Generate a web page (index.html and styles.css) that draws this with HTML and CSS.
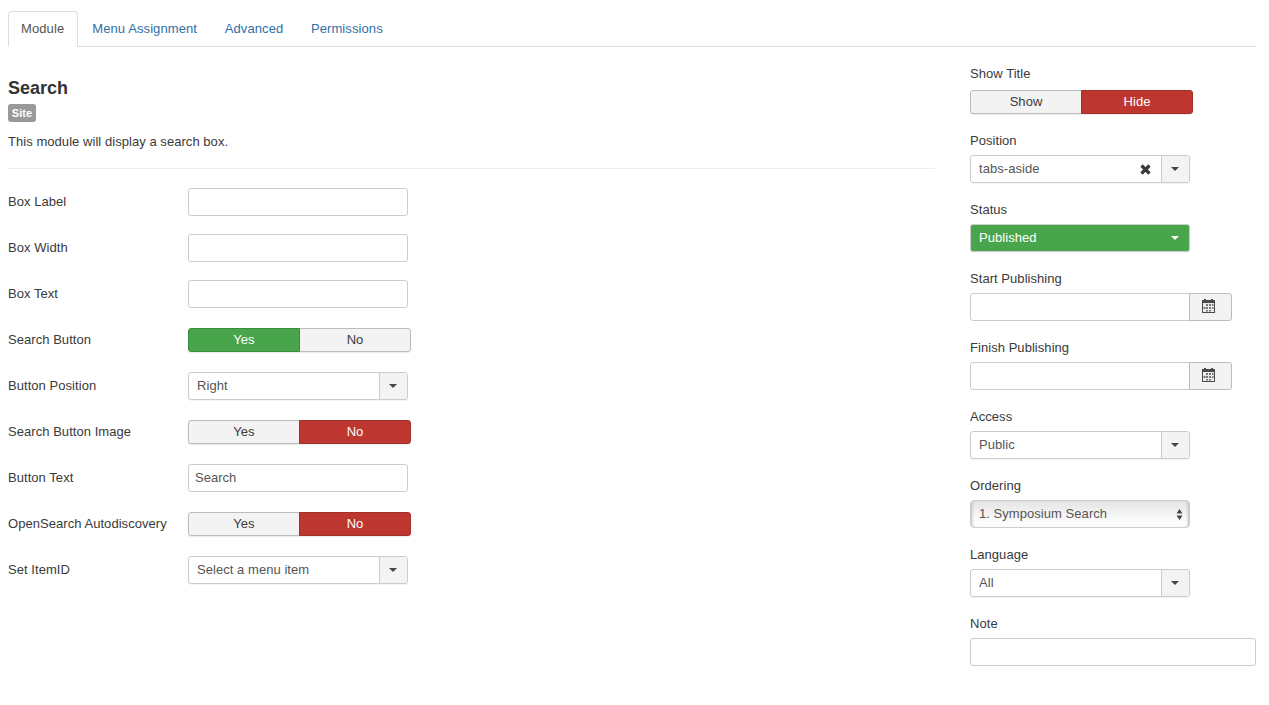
FILE: index.html
```html
<!DOCTYPE html>
<html lang="en">
<head>
<meta charset="utf-8">
<title>Module: Search</title>
<link rel="stylesheet" href="styles.css">
</head>
<body>
<ul class="tabs">
  <li class="tab active">Module</li>
  <li class="tab">Menu Assignment</li>
  <li class="tab">Advanced</li>
  <li class="tab">Permissions</li>
</ul>
<div class="page">
  <main class="main">
    <h2 class="title">Search</h2>
    <span class="badge">Site</span>
    <p class="desc">This module will display a search box.</p>
    <hr class="rule">
    <div class="rows">
      <div class="row"><label class="row-label">Box Label</label><input class="input" type="text"></div>
      <div class="row"><label class="row-label">Box Width</label><input class="input" type="text"></div>
      <div class="row"><label class="row-label">Box Text</label><input class="input" type="text"></div>
      <div class="row"><label class="row-label">Search Button</label>
        <div class="toggle"><span class="seg green">Yes</span><span class="seg">No</span></div></div>
      <div class="row"><label class="row-label">Button Position</label>
        <div class="chosen"><span class="chosen-text">Right</span><span class="chosen-btn"><i class="caret"></i></span></div></div>
      <div class="row"><label class="row-label">Search Button Image</label>
        <div class="toggle"><span class="seg">Yes</span><span class="seg red">No</span></div></div>
      <div class="row"><label class="row-label">Button Text</label><input class="input" type="text" value="Search"></div>
      <div class="row"><label class="row-label">OpenSearch Autodiscovery</label>
        <div class="toggle"><span class="seg">Yes</span><span class="seg red">No</span></div></div>
      <div class="row"><label class="row-label">Set ItemID</label>
        <div class="chosen"><span class="chosen-text">Select a menu item</span><span class="chosen-btn"><i class="caret"></i></span></div></div>
    </div>
  </main>
  <aside class="side">
    <div class="field first"><label class="field-label">Show Title</label>
      <div class="toggle"><span class="seg">Show</span><span class="seg red">Hide</span></div></div>
    <div class="field"><label class="field-label">Position</label>
      <div class="chosen"><span class="chosen-text">tabs-aside</span>
        <svg class="clear" width="11" height="11" viewBox="0 0 11 11"><path d="M1.500 1.500 9.500 9.500M9.500 1.500 1.500 9.500" stroke="#3a3a3a" stroke-width="3.200" fill="none"/></svg>
        <span class="chosen-btn"><i class="caret"></i></span></div></div>
    <div class="field"><label class="field-label">Status</label>
      <div class="chosen status"><span class="chosen-text">Published</span><span class="chosen-btn"><i class="caret"></i></span></div></div>
    <div class="field"><label class="field-label">Start Publishing</label>
      <div class="date"><input class="input date-input" type="text"><span class="date-btn">
        <svg class="cal" width="13" height="14" viewBox="0 0 13 14"><path d="M2 0h2v1h5V0h2v1h2v13H0V1h2z" fill="#4a4a4a"/><path d="M1 4h11v9H1z" fill="#ececec"/><path d="M4 5h2v2H4zM7 5h2v2H7zM10 5h1.500v2H10zM1.500 8h2v2h-2zM4 8h2v2H4zM7 8h2v2H7zM10 8h1.500v2H10zM4 11h2v1.500H4zM7 11h2v1.500H7z" fill="#777"/></svg></span></div></div>
    <div class="field"><label class="field-label">Finish Publishing</label>
      <div class="date"><input class="input date-input" type="text"><span class="date-btn">
        <svg class="cal" width="13" height="14" viewBox="0 0 13 14"><path d="M2 0h2v1h5V0h2v1h2v13H0V1h2z" fill="#4a4a4a"/><path d="M1 4h11v9H1z" fill="#ececec"/><path d="M4 5h2v2H4zM7 5h2v2H7zM10 5h1.500v2H10zM1.500 8h2v2h-2zM4 8h2v2H4zM7 8h2v2H7zM10 8h1.500v2H10zM4 11h2v1.500H4zM7 11h2v1.500H7z" fill="#777"/></svg></span></div></div>
    <div class="field"><label class="field-label">Access</label>
      <div class="chosen"><span class="chosen-text">Public</span><span class="chosen-btn"><i class="caret"></i></span></div></div>
    <div class="field"><label class="field-label">Ordering</label>
      <div class="native"><span>1. Symposium Search</span>
        <svg width="7" height="13" viewBox="0 0 7 13"><path d="M3.500 1 6.500 5.500h-6zM3.500 12 .5 7.500h6z" fill="#444"/></svg></div></div>
    <div class="field"><label class="field-label">Language</label>
      <div class="chosen"><span class="chosen-text">All</span><span class="chosen-btn"><i class="caret"></i></span></div></div>
    <div class="field"><label class="field-label">Note</label><input class="input note" type="text"></div>
  </aside>
</div>
</body>
</html>
```

FILE: styles.css
```css
* { box-sizing: border-box; }
html, body { margin: 0; padding: 0; }
body {
  background: #fff;
  color: #3a3a3a;
  font: 13px/18px "Liberation Sans", Arial, sans-serif;
  letter-spacing: .05px;
  padding: 0 13px 0 8px;
  height: 705px;
  overflow: hidden;
}

/* Tabs */
.tabs {
  display: flex;
  gap: 2px;
  list-style: none;
  margin: 11px 0 0;
  padding: 0;
  height: 36px;
  border-bottom: 1px solid #ddd;
}
.tab {
  height: 36px;
  padding: 8px 13px 0 12px;
  border: 1px solid transparent;
  border-radius: 4px 4px 0 0;
  color: #2f70a9;
  line-height: 18px;
  letter-spacing: .1px;
}
.tab + .tab { padding-left: 11px; padding-right: 12.6px; }
.tab.active {
  color: #555;
  background: #fff;
  border-color: #ddd #ddd #fff;
}

/* Layout */
.page {
  display: grid;
  grid-template-columns: 927px 286px;
  column-gap: 35px;
}
.main { padding-top: 29px; }
.side { padding-top: 19px; }

.title {
  margin: 0;
  font-size: 18px;
  line-height: 24px;
  font-weight: bold;
  color: #333;
  letter-spacing: 0;
}
.badge {
  display: block;
  width: 28px;
  height: 18px;
  margin-top: 4px;
  background: #999;
  border-radius: 3px;
  color: #fff;
  font-size: 11px;
  font-weight: bold;
  line-height: 18px;
  text-align: center;
}
.desc { margin: 11px 0 0; line-height: 18px; }
.rule {
  border: 0;
  border-top: 1px solid #eee;
  margin: 17px 0 19px;
}

/* Rows */
.rows { display: flex; flex-direction: column; gap: 18px; }
.row { display: flex; align-items: center; height: 28px; }
.row-label { width: 180px; flex: none; }

.field { margin-bottom: 17px; }
.field-label { display: block; height: 18px; margin-bottom: 6px; line-height: 20px; }
.first .field-label { line-height: 16px; }
.field > .toggle { margin: 2px 0; }

/* Controls */
.input {
  display: block;
  width: 220px;
  height: 28px;
  padding: 3px 6px 5px;
  border: 1px solid #ccc;
  border-radius: 3px;
  background: #fff;
  color: #555;
  font: 13px/18px "Liberation Sans", Arial, sans-serif;
  outline: 0;
}
.note { width: 286px; }

.toggle {
  display: flex;
  width: 223px;
  height: 24px;
  border-radius: 3px;
  box-shadow: 0 1px 1px rgba(0,0,0,.08);
}
.seg {
  flex: 1 1 50%;
  border: 1px solid #bbb;
  background: #f3f3f3;
  color: #3a3a3a;
  text-align: center;
  line-height: 22px;
}
.seg:first-child { border-radius: 3px 0 0 3px; }
.seg:last-child { border-radius: 0 3px 3px 0; }
.seg + .seg { margin-left: -1px; }
.seg.green { background: #48a54c; border-color: #3a8a3f; color: #fff; position: relative; }
.seg.red { background: #bd362f; border-color: #a32f29; color: #fff; position: relative; }

.chosen {
  display: flex;
  align-items: stretch;
  width: 220px;
  height: 28px;
  border: 1px solid #ccc;
  border-radius: 3px;
  background: #fff;
  color: #555;
  box-shadow: 0 1px 1px rgba(0,0,0,.05);
}
.chosen-text { flex: 1; padding-left: 8px; line-height: 26px; white-space: nowrap; }
.chosen-btn {
  flex: none;
  display: flex;
  align-items: center;
  justify-content: center;
  width: 28px;
  padding-right: 1px;
  background: #f3f3f3;
  border-left: 1px solid #ccc;
  border-radius: 0 2px 2px 0;
}
.caret {
  width: 0;
  height: 0;
  border-left: 4px solid transparent;
  border-right: 4px solid transparent;
  border-top: 4px solid #444;
}
.clear { align-self: center; margin-right: 10px; }

.chosen.status { background: #48a54c; border-color: #ccc; color: #fff; }
.status .chosen-btn { background: transparent; border-left: 0; }
.status .caret { border-top-color: #fff; }

.date { display: flex; }
.date-input { border-radius: 3px 0 0 3px; }
.date-btn {
  display: flex;
  align-items: center;
  justify-content: center;
  width: 43px;
  height: 28px;
  margin-left: -1px;
  padding: 0 4px 2px 0;
  background: #f3f3f3;
  border: 1px solid #bbb;
  border-radius: 0 3px 3px 0;
}

.native {
  display: flex;
  align-items: center;
  justify-content: space-between;
  width: 220px;
  height: 28px;
  padding: 0 6px 0 8px;
  border: 1px solid #ccc;
  border-radius: 4px;
  color: #555;
  background: linear-gradient(#e4e4e4, #fafafa 70%, #fff);
  box-shadow: inset 3px 0 3px -2px #bbb, inset -3px 0 3px -2px #bbb;
}
```
